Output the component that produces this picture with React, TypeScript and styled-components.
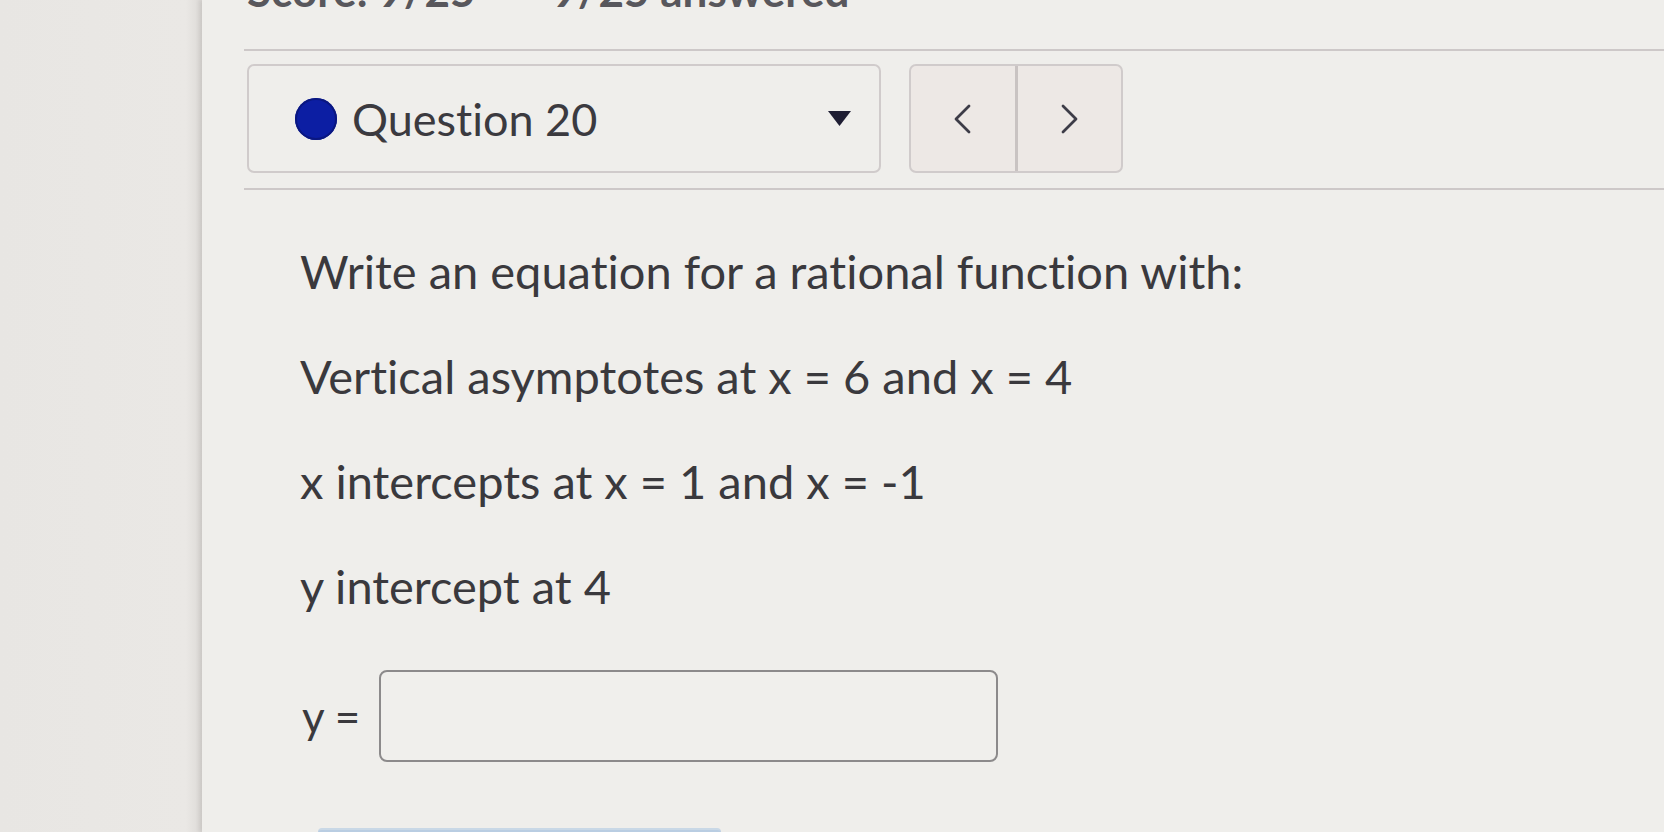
import React from "react";
import styled, { createGlobalStyle } from "styled-components";

const Global = createGlobalStyle`
  html, body { margin: 0; padding: 0; height: 832px; overflow: hidden; }
  body {
    background: #e9e7e4;
    font-family: Lato, "Noto Sans", sans-serif;
    font-variant-ligatures: none;
    color: #3a393d;
  }
  #root { height: 832px; }
`;

const Page = styled.div`
  display: flex;
  height: 832px;
`;

const Gutter = styled.div`
  width: 202px;
  flex: none;
  background: linear-gradient(90deg, #e8e6e3 0%, #eae8e5 92%, #dcd9d6 100%);
`;

const Main = styled.main`
  flex: 1;
  background: #efeeeb;
  box-shadow: -3px 0 4px rgba(0, 0, 0, 0.08);
  padding-left: 42px;
  display: flex;
  flex-direction: column;
  overflow: hidden;
  & > * {
    flex-shrink: 0;
  }
`;

const Score = styled.div`
  font-size: 44px;
  line-height: 44px;
  font-weight: 700;
  color: #58575c;
  margin-top: -32px;
  margin-left: 3px;
  display: flex;
  gap: 77px;
  white-space: nowrap;
`;

const Rule = styled.hr<{ $gap: number }>`
  border: none;
  height: 2px;
  background: #cdc8c8;
  margin: ${(p) => p.$gap}px 0 0 0;
`;

const Toolbar = styled.div`
  display: flex;
  gap: 28px;
  margin-top: 13px;
  margin-left: 3px;
  height: 109px;
`;

const Select = styled.div`
  width: 634px;
  box-sizing: border-box;
  border: 2px solid #d0cbcb;
  border-radius: 7px;
  background: #efeeeb;
  display: flex;
  align-items: center;
  padding: 0 28px 0 46px;
`;

const Dot = styled.span`
  width: 42px;
  height: 42px;
  border-radius: 50%;
  background: #0c1ea3;
  box-shadow: inset 0 0 0 2px #0a1780;
  flex: none;
`;

const QLabel = styled.span`
  font-size: 45px;
  margin-left: 15px;
  flex: 1;
  color: #3b3a3f;
`;

const NavGroup = styled.div`
  display: flex;
  width: 214px;
  box-sizing: border-box;
  border: 2px solid #d0cbcb;
  border-radius: 7px;
  background: #ede8e5;
  overflow: hidden;
`;

const NavButton = styled.button<{ $divider?: boolean }>`
  flex: 1;
  border: none;
  background: transparent;
  display: flex;
  align-items: center;
  justify-content: center;
  padding: 0;
  border-right: ${(p) => (p.$divider ? "3px solid #c9c3c2" : "none")};
`;

const Body = styled.section`
  padding-left: 56px;
  display: flex;
  flex-direction: column;
  padding-top: 56px;
  & > * {
    flex-shrink: 0;
  }
`;

const Line = styled.p`
  margin: 0 0 55px 0;
  font-size: 47px;
  line-height: 50px;
  color: #3a393d;
  white-space: nowrap;
`;

const AnswerRow = styled.div`
  display: flex;
  align-items: center;
  gap: 19px;
  margin-top: 4px;
`;

const AnswerLabel = styled.span`
  font-size: 44px;
  color: #3a393d;
  margin-left: 2px;
`;

const AnswerInput = styled.input`
  width: 619px;
  height: 92px;
  box-sizing: border-box;
  border: 2px solid #8c8a8b;
  border-radius: 8px;
  background: #f0efec;
  outline: none;
`;

const Submit = styled.button`
  margin-top: 66px;
  margin-left: 18px;
  width: 403px;
  height: 50px;
  border: none;
  border-top: 2px solid #c9d8e6;
  border-radius: 4px 4px 0 0;
  background: #b9cde2;
`;

const Chevron = ({ dir }: { dir: "left" | "right" }) => (
  <svg width="20" height="32" viewBox="0 0 20 32">
    <polyline
      points={dir === "left" ? "16,3 3,16 16,29" : "4,3 17,16 4,29"}
      fill="none"
      stroke="#3d3c47"
      strokeWidth="2.8"
      strokeLinecap="round"
      strokeLinejoin="round"
    />
  </svg>
);

const Caret = () => (
  <svg width="23" height="15" viewBox="0 0 23 15">
    <polygon points="0,0 23,0 11.5,15" fill="#1f1e33" />
  </svg>
);

export default function App() {
  return (
    <>
      <Global />
      <Page>
        <Gutter />
        <Main>
          <Score>
            <span>Score: 9/25</span>
            <span>9/25 answered</span>
          </Score>
          <Rule $gap={37} />
          <Toolbar>
            <Select>
              <Dot />
              <QLabel>Question 20</QLabel>
              <Caret />
            </Select>
            <NavGroup>
              <NavButton $divider aria-label="Previous">
                <Chevron dir="left" />
              </NavButton>
              <NavButton aria-label="Next">
                <Chevron dir="right" />
              </NavButton>
            </NavGroup>
          </Toolbar>
          <Rule $gap={15} />
          <Body>
            <Line>Write an equation for a rational function with:</Line>
            <Line>Vertical asymptotes at x = 6 and x = 4</Line>
            <Line>x intercepts at x = 1 and x = -1</Line>
            <Line>y intercept at 4</Line>
            <AnswerRow>
              <AnswerLabel>y =</AnswerLabel>
              <AnswerInput type="text" />
            </AnswerRow>
            <Submit aria-label="Submit" />
          </Body>
        </Main>
      </Page>
    </>
  );
}
